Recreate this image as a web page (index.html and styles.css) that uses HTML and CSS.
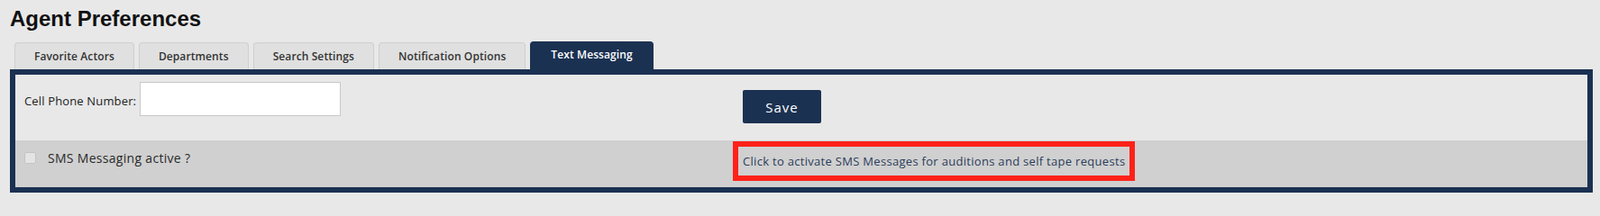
FILE: index.html
```html
<!DOCTYPE html>
<html lang="en">
<head>
<meta charset="utf-8">
<title>Agent Preferences</title>
<link rel="stylesheet" href="styles.css">
</head>
<body>
<h1 class="page-title">Agent Preferences</h1>
<nav class="tabs">
  <a class="tab">Favorite Actors</a>
  <a class="tab">Departments</a>
  <a class="tab">Search Settings</a>
  <a class="tab">Notification Options</a>
  <a class="tab tab-active">Text Messaging</a>
</nav>
<section class="panel">
  <div class="row row-form">
    <div class="cell cell-phone">
      <label class="phone-label" for="phone">Cell Phone Number:</label>
      <input class="phone-input" id="phone" type="text">
    </div>
    <div class="cell cell-save">
      <button class="save-btn" type="button">Save</button>
    </div>
  </div>
  <div class="row row-sms">
    <div class="cell cell-check">
      <input class="check" type="checkbox" id="sms">
      <label class="check-label" for="sms">SMS Messaging active ?</label>
    </div>
    <div class="cell cell-note">
      <a class="note-link">Click to activate SMS Messages for auditions and self tape requests</a>
    </div>
  </div>
</section>
</body>
</html>
```

FILE: styles.css
```css
html, body {
  margin: 0;
  padding: 0;
  background: #e8e8e8;
}

body {
  font-family: "Open Sans", "DejaVu Sans", sans-serif;
  color: #2a2a2a;
  letter-spacing: 0.3px;
}

.page-title {
  margin: 0;
  padding: 7px 0 0 11px;
  height: 39px;
  font-family: "Liberation Sans", Arial, sans-serif;
  font-weight: bold;
  font-size: 24px;
  line-height: 28px;
  letter-spacing: 0;
  color: #111;
}

.tabs {
  display: flex;
  gap: 5px;
  padding-left: 16px;
  height: 31px;
}

.tab {
  display: flex;
  align-items: center;
  height: 30px;
  padding: 0 21px;
  margin-top: 1px;
  box-sizing: border-box;
  background: #e0e0e0;
  border: 1px solid #cfcfcf;
  border-bottom: none;
  border-radius: 4px 4px 0 0;
  font-size: 12px;
  font-weight: 600;
  letter-spacing: 0.1px;
  color: #333;
  white-space: nowrap;
}

.tab-active {
  height: 31px;
  margin-top: 0;
  background: #1b3152;
  border-color: #1b3152;
  color: #fff;
  padding: 5px 22px 0;
  align-items: flex-start;
}

.panel {
  margin: 0 8px 0 11px;
  border: 6px solid #1b3152;
  background: #e8e8e8;
}

.row {
  display: grid;
  grid-template-columns: 796px 1fr;
}

.row-form {
  height: 73px;
  background: #e8e8e8;
}

.row-sms {
  height: 52px;
  background: #d0d0d0;
}

.cell-phone {
  display: flex;
  align-items: center;
  padding: 8px 0 0 10px;
  height: 38px;
}

.phone-label {
  font-size: 13px;
  letter-spacing: 0.15px;
  color: #222;
  margin-right: 4px;
  padding-top: 3px;
}

.phone-input {
  width: 223px;
  height: 38px;
  box-sizing: border-box;
  margin: 0;
  border: 1px solid #c8c8c8;
  background: #fff;
  padding: 0 6px;
}

.cell-save {
  padding: 17px 0 0 11px;
}

.save-btn {
  width: 87px;
  height: 37px;
  border: none;
  border-radius: 2px;
  background: #1b3152;
  color: #fff;
  font-family: "Open Sans", "DejaVu Sans", sans-serif;
  font-size: 15px;
  letter-spacing: 1px;
  padding: 0;
}

.cell-check {
  display: flex;
  align-items: center;
  padding: 13px 0 0 10px;
  height: 13px;
}

.check {
  appearance: none;
  -webkit-appearance: none;
  width: 13px;
  height: 13px;
  margin: 0 13px 0 0;
  box-sizing: border-box;
  border: 1px solid #c4c4c4;
  border-radius: 2px;
  background: #e4e4e4;
}

.check-label {
  font-size: 14px;
  color: #2a2a2a;
}

.cell-note {
  padding-top: 1px;
}

.note-link {
  display: inline-flex;
  align-items: center;
  height: 44px;
  box-sizing: border-box;
  padding: 0 5px;
  border: 6px solid #ff2219;
  font-size: 13px;
  color: #2c3c5a;
  white-space: nowrap;
}
```
